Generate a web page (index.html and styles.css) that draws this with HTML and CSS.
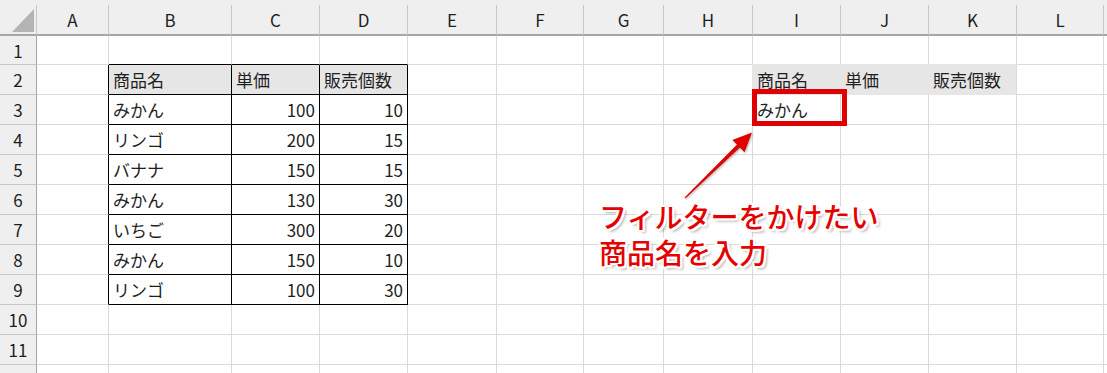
FILE: index.html
```html
<!DOCTYPE html>
<html lang="ja">
<head>
    <meta charset="UTF-8">
    <meta name="viewport" content="width=device-width, initial-scale=1.0">
    <title>フィルター</title>
    <link rel="stylesheet" href="styles.css">
</head>
<body>
    <div class="page">
        <div class="sheet">
            <!-- column headers -->
            <div class="corner"><span class="tri"></span></div>
            <div class="col">A</div><div class="col">B</div><div class="col">C</div><div class="col">D</div>
            <div class="col">E</div><div class="col">F</div><div class="col">G</div><div class="col">H</div>
            <div class="col">I</div><div class="col">J</div><div class="col">K</div><div class="col">L</div>
            <div class="col"></div>

            <!-- row 1 -->
            <div class="row">1</div>
            <div></div><div class="top"></div><div class="top"></div><div class="top"></div>
            <div></div><div></div><div></div><div></div>
            <div class="under"></div><div class="under"></div><div class="under"></div><div></div><div></div>

            <!-- row 2 -->
            <div class="row">2</div>
            <div class="lft"></div><div class="box hd">商品名</div><div class="box hd">単価</div><div class="box hd">販売個数</div>
            <div></div><div></div><div></div><div class="pre"></div>
            <div class="fill">商品名</div><div class="fill">単価</div><div class="fill last">販売個数</div><div></div><div></div>

            <!-- row 3 -->
            <div class="row">3</div>
            <div class="lft"></div><div class="box">みかん</div><div class="box num">100</div><div class="box num">10</div>
            <div></div><div></div><div></div><div></div>
            <div>みかん</div><div></div><div></div><div></div><div></div>

            <!-- row 4 -->
            <div class="row">4</div>
            <div class="lft"></div><div class="box">リンゴ</div><div class="box num">200</div><div class="box num">15</div>
            <div></div><div></div><div></div><div></div>
            <div></div><div></div><div></div><div></div><div></div>

            <!-- row 5 -->
            <div class="row">5</div>
            <div class="lft"></div><div class="box">バナナ</div><div class="box num">150</div><div class="box num">15</div>
            <div></div><div></div><div></div><div></div>
            <div></div><div></div><div></div><div></div><div></div>

            <!-- row 6 -->
            <div class="row">6</div>
            <div class="lft"></div><div class="box">みかん</div><div class="box num">130</div><div class="box num">30</div>
            <div></div><div></div><div></div><div></div>
            <div></div><div></div><div></div><div></div><div></div>

            <!-- row 7 -->
            <div class="row">7</div>
            <div class="lft"></div><div class="box">いちご</div><div class="box num">300</div><div class="box num">20</div>
            <div></div><div></div><div></div><div></div>
            <div></div><div></div><div></div><div></div><div></div>

            <!-- row 8 -->
            <div class="row">8</div>
            <div class="lft"></div><div class="box">みかん</div><div class="box num">150</div><div class="box num">10</div>
            <div></div><div></div><div></div><div></div>
            <div></div><div></div><div></div><div></div><div></div>

            <!-- row 9 -->
            <div class="row">9</div>
            <div class="lft"></div><div class="box">リンゴ</div><div class="box num">100</div><div class="box num">30</div>
            <div></div><div></div><div></div><div></div>
            <div></div><div></div><div></div><div></div><div></div>

            <!-- rows 10 - 12 (12 is scrolled just past the bottom edge) -->
            <div class="row">10</div>
            <div></div><div></div><div></div><div></div><div></div><div></div><div></div><div></div>
            <div></div><div></div><div></div><div></div><div></div>

            <div class="row">11</div>
            <div></div><div></div><div></div><div></div><div></div><div></div><div></div><div></div>
            <div></div><div></div><div></div><div></div><div></div>

            <div class="row"></div>
            <div></div><div></div><div></div><div></div><div></div><div></div><div></div><div></div>
            <div></div><div></div><div></div><div></div><div></div>
        </div>

        <!-- annotation drawn over the sheet -->
        <div class="mark"></div>
        <svg class="arrow" width="1107" height="373" viewBox="0 0 1107 373">
            <polygon points="684.6,197.6 737,144.6 732.3,140 752,132.5 744.5,152.3 739.9,147.6 685.4,198.4" />
        </svg>
        <p class="callout">フィルターをかけたい<br>商品名を入力</p>
    </div>
</body>
</html>
```

FILE: styles.css
```css
* {
    box-sizing: border-box;
}
body {
    margin: 0;
    overflow: hidden;
    background: #fff;
    color: #1e1e1e;
    font-family: "Noto Sans CJK JP", "Noto Sans", sans-serif;
}
.page {
    position: relative;
    width: 1107px;
    height: 373px;
    overflow: hidden;
}
.sheet {
    display: grid;
    grid-template-columns: 37px 72px 123px 88px 88px 89px 87px 80px 89px 88px 88px 88px 87px 1fr;
    grid-template-rows: 36px 29px;
    grid-auto-rows: 30px;
    background: #efefef;
    font-size: 17px;
}
.sheet > div {
    display: flex;
    align-items: center;
    padding: 0 4px;
    background: #fff;
    border-right: 1px solid #dadada;
    border-bottom: 1px solid #dadada;
    white-space: nowrap;
    overflow: hidden;
}

/* headers */
.sheet > .col,
.sheet > .corner {
    margin-top: 5px;
    justify-content: center;
    background: #efefef;
    border-right-color: #c8c8c8;
    border-bottom: 2px solid #a6a6a6;
}
.sheet > .corner {
    justify-content: flex-end;
    align-items: flex-end;
    padding: 0 2px 2px 0;
}
.tri {
    width: 22px;
    height: 23px;
    background: #b4b4b4;
    clip-path: polygon(100% 0, 100% 100%, 0 100%);
}
.sheet > .row {
    justify-content: center;
    padding: 0;
    background: #efefef;
    border-right-color: #a6a6a6;
    border-bottom-color: #c6c6c6;
}

/* bordered table B2:D9 */
.sheet > .top {
    border-bottom-color: #000;
}
.sheet > .lft {
    border-right-color: #000;
}
.sheet > .box {
    border-right-color: #000;
    border-bottom-color: #000;
}
.sheet > .hd {
    background: #e7e6e6;
}
.sheet > .num {
    justify-content: flex-end;
}

/* criteria header I2:K2 */
.sheet > .under {
    border-bottom-color: #e7e6e6;
}
.sheet > .pre {
    border-right-color: #e7e6e6;
}
.sheet > .fill {
    background: #e7e6e6;
    border-right-color: #e7e6e6;
    border-bottom-color: #e7e6e6;
}
.sheet > .fill.last {
    border-right-color: #dadada;
}

/* annotation */
.mark {
    position: absolute;
    left: 752px;
    top: 89px;
    width: 95px;
    height: 37px;
    border: 5px solid #e00000;
}
.arrow {
    position: absolute;
    left: 0;
    top: 0;
    pointer-events: none;
}
.arrow polygon {
    fill: #e00000;
    filter: drop-shadow(1px 1px 1px rgba(0, 0, 0, 0.3));
}
.callout {
    position: absolute;
    left: 599px;
    top: 198px;
    margin: 0;
    font-size: 28px;
    line-height: 36px;
    font-weight: 500;
    color: #e60000;
    text-shadow:
        -2px 0 #fff, 2px 0 #fff, 0 -2px #fff, 0 2px #fff,
        -2px -2px #fff, 2px -2px #fff, -2px 2px #fff, 2px 2px #fff,
        3px 3px 3px rgba(0, 0, 0, 0.35);
}
```
